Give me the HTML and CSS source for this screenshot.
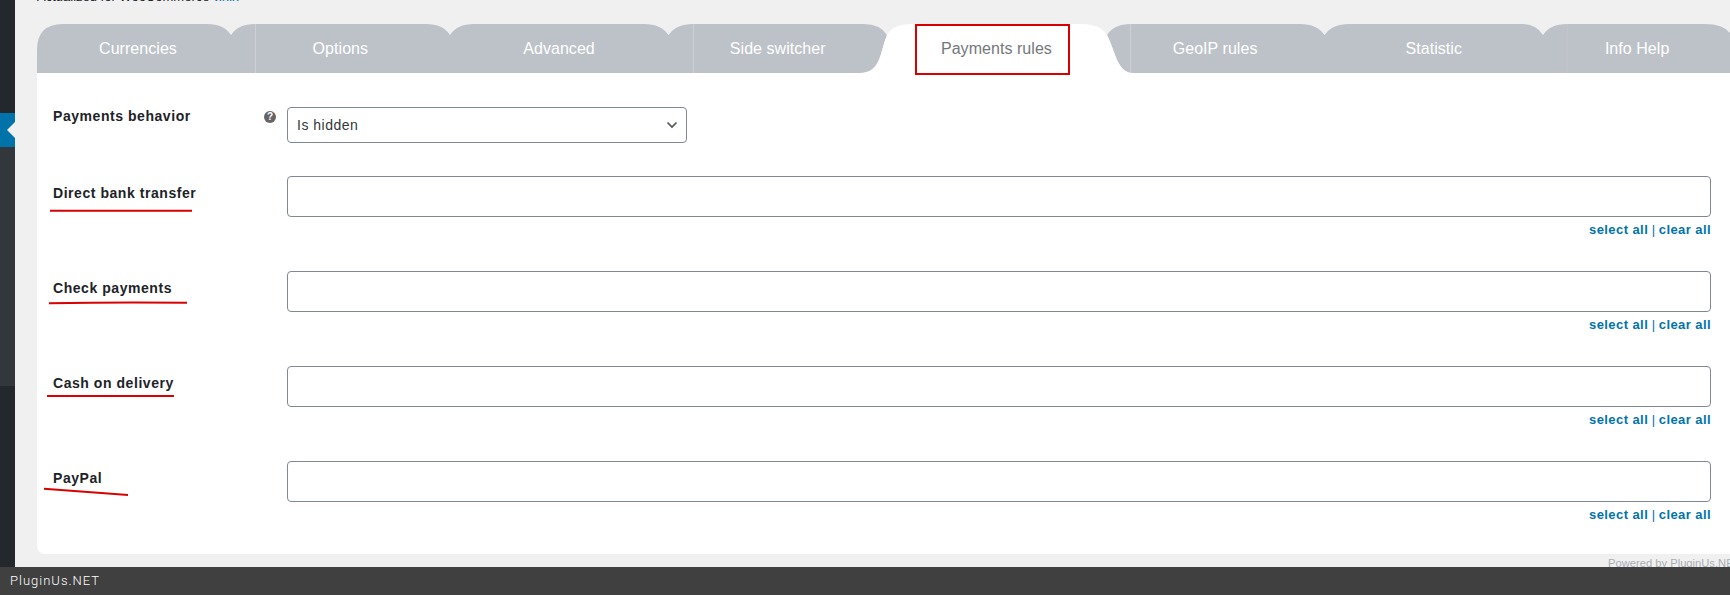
FILE: index.html
```html
<!DOCTYPE html>
<html lang="en">
<head>
<meta charset="utf-8">
<title>Payments rules</title>
<link rel="stylesheet" href="styles.css">
</head>
<body>
<div class="page">
  <div class="main">
    <aside class="sidebar">
      <div class="side-dark side-top"></div>
      <div class="side-current"><span class="side-arrow"></span></div>
      <div class="side-light"></div>
      <div class="side-dark side-bottom"></div>
    </aside>
    <div class="content">
      <p class="actualized">Actualized for WooCommerce <a class="link" href="#">v.x.x</a></p>
      <div class="tabs">
        <svg class="tabs-shape" viewBox="37 24 1693 49" width="1693" height="49" aria-hidden="true">
          <path class="tab-grey" d="M37 73V50Q37 24 63 24H207Q224 24 231 35Q238 24 255 24H426Q443 24 450 35Q457 24 474 24H644Q661 24 668.5 35Q676 24 693 24H864Q880 24 887 35C880 52 881 73 860 73Z"/>
          <path class="tab-grey" d="M1133 73C1117 73 1115 50 1107 35Q1114 24 1131 24H1300Q1317 24 1324.5 35Q1332 24 1349 24H1522Q1536 24 1543 35Q1550 24 1567 24H1705Q1723 24 1730 33V73Z"/>
          <path class="tab-white" d="M860 73C881 73 880 52 887 35Q893 24 912 24H1082Q1100 24 1107 35C1115 50 1117 73 1133 73Z"/>
          <path class="tab-sep" d="M255.5 24V73M693.5 24V73M1130.5 24V73"/>
          <path class="tab-sep-faint" d="M1567.5 24V73"/>
        </svg>
        <a class="tab tab-first" href="#">Currencies</a>
        <a class="tab" href="#">Options</a>
        <a class="tab" href="#">Advanced</a>
        <a class="tab" href="#">Side switcher</a>
        <a class="tab tab-active" href="#">Payments rules</a>
        <a class="tab" href="#">GeoIP rules</a>
        <a class="tab" href="#">Statistic</a>
        <a class="tab tab-last" href="#">Info Help</a>
      </div>
      <section class="panel">
        <div class="row row-first">
          <div class="label label-first">
            <span>Payments behavior</span>
            <span class="help">?</span>
          </div>
          <div class="field">
            <div class="select-wrap">
              <select class="select">
                <option>Is hidden</option>
              </select>
              <svg class="chevron" viewBox="0 0 12 8" width="12" height="8" aria-hidden="true"><path d="M1.5 1.5 6 6l4.5-4.5"/></svg>
            </div>
          </div>
        </div>
        <div class="row">
          <div class="label">Direct bank transfer</div>
          <div class="field">
            <div class="multi"></div>
            <div class="actions"><a class="link" href="#">select all</a> | <a class="link" href="#">clear all</a></div>
          </div>
        </div>
        <div class="row">
          <div class="label">Check payments</div>
          <div class="field">
            <div class="multi"></div>
            <div class="actions"><a class="link" href="#">select all</a> | <a class="link" href="#">clear all</a></div>
          </div>
        </div>
        <div class="row">
          <div class="label">Cash on delivery</div>
          <div class="field">
            <div class="multi"></div>
            <div class="actions"><a class="link" href="#">select all</a> | <a class="link" href="#">clear all</a></div>
          </div>
        </div>
        <div class="row">
          <div class="label">PayPal</div>
          <div class="field">
            <div class="multi"></div>
            <div class="actions"><a class="link" href="#">select all</a> | <a class="link" href="#">clear all</a></div>
          </div>
        </div>
      </section>
      <p class="powered">Powered by PluginUs.NET</p>
    </div>
  </div>
  <footer class="footer">PluginUs.NET</footer>
  <div class="mark-box"></div>
  <svg class="mark-lines" viewBox="0 0 1730 595" width="1730" height="595" aria-hidden="true">
    <path d="M50 210.7H192"/>
    <path d="M49 303.2Q120 302 187 302.8"/>
    <path d="M47 396H174"/>
    <path d="M44 488.8L128 495"/>
  </svg>
</div>
</body>
</html>
```
FILE: styles.css
```css
* { box-sizing: border-box; }
html, body { margin: 0; padding: 0; }
body {
  width: 1730px;
  height: 595px;
  overflow: hidden;
  background: #f0f0f1;
  font-family: "Liberation Sans", Arial, sans-serif;
  color: #1d2327;
}
.page {
  position: relative;
  display: flex;
  flex-direction: column;
  height: 595px;
}
.main {
  display: flex;
  height: 567px;
  overflow: hidden;
}
.sidebar {
  display: flex;
  flex-direction: column;
  flex: 0 0 15px;
  width: 15px;
}
.side-dark { background: #23282d; }
.side-top { height: 113px; }
.side-current {
  height: 34px;
  background: #0073aa;
  display: flex;
  align-items: center;
  justify-content: flex-end;
}
.side-arrow {
  width: 0;
  height: 0;
  border-top: 8px solid transparent;
  border-bottom: 8px solid transparent;
  border-right: 8px solid #f0f0f1;
}
.side-light { height: 239px; background: #32373c; }
.side-bottom { flex: 1; }
.content {
  flex: 1;
  min-width: 0;
  padding-left: 22px;
  overflow: hidden;
}
.actualized {
  margin: -12px 0 0;
  height: 36px;
  line-height: 18px;
  font-size: 13px;
  white-space: nowrap;
}
.link { color: #0073aa; text-decoration: none; }
.tabs {
  position: relative;
  display: flex;
  height: 49px;
}
.tabs-shape {
  position: absolute;
  left: 0;
  top: 0;
  display: block;
}
.tab-grey { fill: #bdc2c8; }
.tab-white { fill: #fff; }
.tab-sep { stroke: #cdd1d5; stroke-width: 1; fill: none; }
.tab-sep-faint { stroke: #c1c5ca; stroke-width: 1; fill: none; }
.tab {
  position: relative;
  display: flex;
  align-items: center;
  justify-content: center;
  flex: 0 0 218.7px;
  height: 49px;
  font-size: 16px;
  letter-spacing: 0.05px;
  color: #fff;
  text-decoration: none;
  white-space: nowrap;
}
.tab-first { flex-basis: 194px; padding-left: 8px; }
.tab-last { flex-basis: 188px; }
.tab-active { color: #74777b; }
.panel {
  background: #fff;
  height: 481px;
  padding: 34px 19px 0 16px;
  border-bottom-left-radius: 8px;
}
.row {
  display: flex;
  align-items: flex-start;
  margin-bottom: 30px;
}
.row-first { margin-bottom: 33px; }
.label {
  display: flex;
  justify-content: space-between;
  flex: 0 0 234px;
  padding: 8px 36px 0 0;
  font-size: 14px;
  line-height: 18px;
  font-weight: 700;
  letter-spacing: 0.55px;
}
.label-first { padding: 0 11px 0 0; }
.help {
  flex: none;
  width: 12px;
  height: 12px;
  margin-top: 4px;
  border-radius: 50%;
  background: #646464;
  color: #fff;
  font-size: 10px;
  line-height: 12px;
  letter-spacing: 0;
  text-align: center;
}
.field { flex: 1; min-width: 0; }
.select-wrap {
  position: relative;
  width: 400px;
  height: 36px;
}
.select {
  appearance: none;
  -webkit-appearance: none;
  display: block;
  width: 100%;
  height: 100%;
  padding: 0 24px 0 9px;
  border: 1px solid #7e8993;
  border-radius: 4px;
  background: #fff;
  color: #32373c;
  font-family: "Liberation Sans", Arial, sans-serif;
  font-size: 14px;
  letter-spacing: 0.5px;
}
.chevron {
  position: absolute;
  right: 9px;
  top: 14px;
  fill: none;
  stroke: #555;
  stroke-width: 1.7;
}
.multi {
  height: 41px;
  background: #fff;
  border: 1px solid #7e8993;
  border-radius: 4px;
}
.actions {
  height: 24px;
  padding-top: 5px;
  text-align: right;
  font-size: 13px;
  line-height: 16px;
  color: #0073aa;
}
.actions .link { font-weight: 700; letter-spacing: 0.42px; }
.powered {
  margin: 2px 0 0 1571px;
  font-size: 11.2px;
  line-height: 14px;
  color: #a9adb1;
  white-space: nowrap;
}
.footer {
  flex: 0 0 28px;
  background: #404040;
  color: #fff;
  padding-left: 10px;
  font-family: Roboto, sans-serif;
  font-weight: 300;
  font-size: 13px;
  line-height: 28px;
  letter-spacing: 1px;
}
.mark-box {
  position: absolute;
  left: 915px;
  top: 24px;
  width: 155px;
  height: 51px;
  border: 2px solid #d80000;
}
.mark-lines {
  position: absolute;
  left: 0;
  top: 0;
  pointer-events: none;
  fill: none;
  stroke: #d80000;
  stroke-width: 2;
}
```
